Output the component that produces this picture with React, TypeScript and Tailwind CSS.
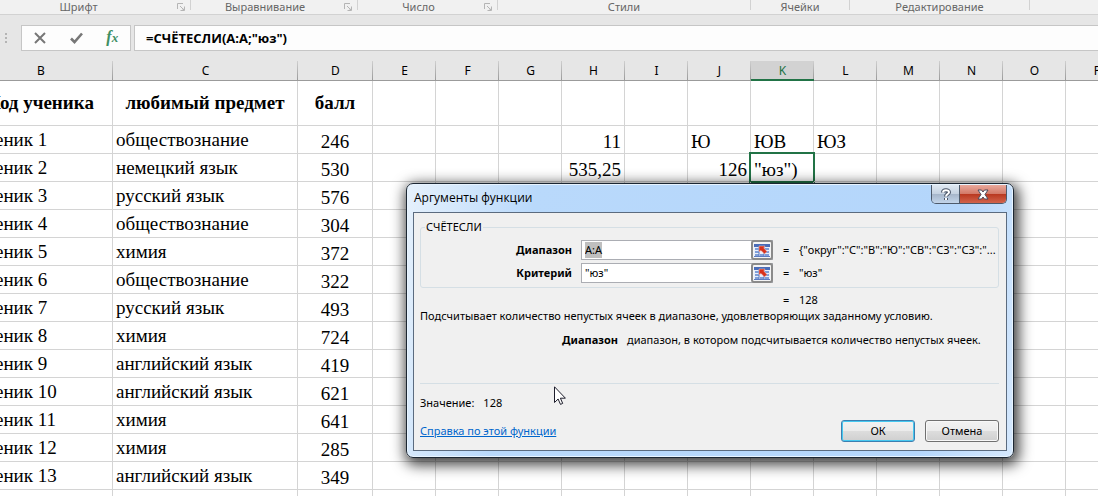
import { useEffect, useRef } from 'react';
import clsx from 'clsx';

type Column = { name: string; width: string };

const ribbonGroups = [
  { title: 'Шрифт', width: 'w-[206px]', launcher: true },
  { title: 'Выравнивание', width: 'w-[167px]', launcher: true },
  { title: 'Число', width: 'w-[140px]', launcher: true },
  { title: 'Стили', width: 'w-[253px]', launcher: false },
  { title: 'Ячейки', width: 'w-[99px]', launcher: false },
  { title: 'Редактирование', width: 'w-[180px]', launcher: false },
];

const columns: Column[] = [
  { name: 'B', width: 'w-[144px]' },
  { name: 'C', width: 'w-[185px]' },
  { name: 'D', width: 'w-[75px]' },
  ...'EFGHIJKLMNOP'.split('').map((name) => ({ name, width: 'w-[63px]' })),
];

const students: [string, number][] = [
  ['обществознание', 246],
  ['немецкий язык', 530],
  ['русский язык', 576],
  ['обществознание', 304],
  ['химия', 372],
  ['обществознание', 322],
  ['русский язык', 493],
  ['химия', 724],
  ['английский язык', 419],
  ['английский язык', 621],
  ['химия', 641],
  ['химия', 285],
  ['английский язык', 349],
];

// cells to the right of the student list, keyed by column + student number
const extraCells: Record<string, string> = {
  H1: '11',
  J1: 'Ю',
  K1: 'ЮВ',
  L1: 'ЮЗ',
  H2: '535,25',
  J2: '126',
  K2: '"юз")',
};

const LauncherIcon = () => (
  <svg width="8" height="8" viewBox="0 0 8 8" fill="none" stroke="#b5b5b5">
    <path d="M.5 6V.5H6M3 3l4 4M7.5 3.5v4h-4" />
    <path d="M5 7h2.5V5z" fill="#b5b5b5" stroke="none" />
  </svg>
);

const Ribbon = () => (
  <div className="h-[15px] shrink-0 border-b border-[#d2d2d2] bg-[#f1f1f1]">
    <div className="-ml-[15px] flex h-[10px] text-[11px] leading-[13px] text-[#666]">
      {ribbonGroups.map((group) => (
        <div
          key={group.title}
          className={clsx(
            'flex shrink-0 border-r border-[#d2d2d2]',
            group.width,
          )}
        >
          <span className="flex-1 text-center">{group.title}</span>
          {group.launcher && (
            <button
              aria-label={`Параметры: ${group.title}`}
              className="flex w-[18px] items-start justify-center pt-[3px]"
            >
              <LauncherIcon />
            </button>
          )}
        </div>
      ))}
    </div>
  </div>
);

const FormulaBar = () => (
  <div className="flex h-[46px] shrink-0 items-start bg-[#e6e6e6] pt-[10px]">
    <div className="flex h-[26px] w-[21px] flex-col items-start justify-center gap-[2px] pl-[5px]">
      <i className="size-[2px] bg-[#b4b4b4]" />
      <i className="size-[2px] bg-[#b4b4b4]" />
      <i className="size-[2px] bg-[#b4b4b4]" />
    </div>
    <div className="flex h-[26px] w-[110px] items-center justify-around border border-[#c6c6c6] bg-[#fdfdfd]">
      <button aria-label="Отмена">
        <svg width="12" height="12" viewBox="0 0 12 12" fill="none">
          <path d="M1 1l10 10M11 1L1 11" stroke="#777" strokeWidth="2" />
        </svg>
      </button>
      <button aria-label="Ввод">
        <svg width="13" height="12" viewBox="0 0 13 12" fill="none">
          <path d="M1 6.5l3.500 3.500L12 1.500" stroke="#777" strokeWidth="2.600" />
        </svg>
      </button>
      <button
        aria-label="Вставить функцию"
        className="pb-px font-['Liberation_Serif',serif] text-[16px] leading-[16px] font-bold text-[#3f8f63] italic"
      >
        f<span className="text-[13px]">x</span>
      </button>
    </div>
    <input
      aria-label="Строка формул"
      defaultValue={'=СЧЁТЕСЛИ(A:A;"юз")'}
      className="ml-[3px] h-[26px] min-w-0 flex-1 border border-r-0 border-[#c6c6c6] bg-[#fdfdfd] px-[11px] font-['Open_Sans',sans-serif] text-[13px] font-bold outline-none"
    />
  </div>
);

const Sheet = () => (
  <div className="min-h-0 flex-1 overflow-hidden bg-white">
    <table className="-ml-[31px] w-[1160px] table-fixed border-separate border-spacing-0 font-['Liberation_Serif',serif] text-[19px] leading-[22px]">
      <thead>
        <tr className="h-[20px]">
          {columns.map(({ name, width }) => (
            <th
              key={name}
              scope="col"
              className={clsx(
                "bg-[linear-gradient(#cfcfcf,#9b9b9b)] bg-[length:1px_100%] bg-right bg-no-repeat px-0 pt-[2px] pb-0 align-top font-['Noto_Sans',sans-serif] text-[12px] leading-[16px] font-normal",
                width,
                name === 'K'
                  ? 'border-b-2 border-[#217346] bg-[#d2d2d2] text-[#217346]'
                  : 'border-b border-[#9b9b9b] bg-[#e6e6e6]',
              )}
            >
              {name}
            </th>
          ))}
        </tr>
      </thead>
      <tbody>
        <tr className="h-[45px] text-center font-bold">
          {columns.map(({ name }) => (
            <td key={name} className="border-r border-b border-[#d4d4d4] p-0">
              {name === 'B' && 'Код ученика'}
              {name === 'C' && 'любимый предмет'}
              {name === 'D' && 'балл'}
            </td>
          ))}
        </tr>
        {students.map(([subject, score], i) => (
          <tr key={i} className="h-[28px]">
            {columns.map(({ name }) => {
              const extra = extraCells[name + (i + 1)];
              return (
                <td
                  key={name}
                  className={clsx(
                    'relative border-r border-b border-[#d4d4d4] px-[3px] py-0 whitespace-nowrap',
                    name === 'B' || name === 'C' ? 'align-middle' : 'align-bottom',
                    name === 'D' && 'text-center',
                    (name === 'H' || name === 'J') && /^\d/.test(extra) && 'text-right',
                  )}
                >
                  {name === 'B' && `Ученик ${i + 1}`}
                  {name === 'C' && subject}
                  {name === 'D' && score}
                  {extra}
                  {name + i === 'K1' && (
                    <span className="absolute -top-[2px] -right-[2px] -bottom-[2px] -left-[2px] border-2 border-[#217346]" />
                  )}
                </td>
              );
            })}
          </tr>
        ))}
        <tr className="h-[28px]">
          {columns.map(({ name }) => (
            <td key={name} className="border-r border-b border-[#d4d4d4] p-0" />
          ))}
        </tr>
      </tbody>
    </table>
  </div>
);

const RefPickerIcon = () => (
  <svg width="16" height="13" viewBox="0 0 16 13">
    <path d="M0 0h16v13H0z" fill="#e9effa" />
    <path d="M0 0h16v3H0z" fill="#4a6cb8" />
    <path d="M1 4h4v2H1zM1 7h4v2H1zM1 10h4v2H1zM6 10h4v2H6zM11 4h4v2h-4zM11 7h4v2h-4zM11 10h4v2h-4z" fill="#7f9ed8" />
    <path d="M5 3v10M10 3v10M0 12.500h16" stroke="#5d7cc0" />
    <path d="M5 2h6L9.800 4 13 7.500 10.500 10 7 6.500 5 8z" fill="#d8321c" stroke="#f6cfc6" strokeWidth=".5" />
  </svg>
);

type ArgumentRowProps = {
  id: string;
  label: string;
  value: string;
  result: string;
  selected?: boolean;
};

const ArgumentRow = ({ id, label, value, result, selected }: ArgumentRowProps) => {
  const inputRef = useRef<HTMLInputElement>(null);

  useEffect(() => {
    if (selected) inputRef.current?.select();
  }, [selected]);

  return (
    <div className="flex h-[20px] items-center">
      <label htmlFor={id} className="w-[151px] text-right font-bold">
        {label}
      </label>
      <div className="ml-[9px] flex h-[20px] w-[192px] border border-[#abadb3] bg-white">
        <input
          id={id}
          ref={inputRef}
          defaultValue={value}
          className="min-w-0 flex-1 pl-[3px] outline-none selection:bg-[#bfbfbf] selection:text-black"
        />
        <button
          aria-label={`Выбрать: ${label}`}
          className="-my-px -mr-px flex w-[22px] items-center justify-center rounded-[3px] border-2 border-[#8a8a8a] bg-[#f4f4f4]"
        >
          <RefPickerIcon />
        </button>
      </div>
      <span className="ml-[10px] w-[16px]">=</span>
      <span className="min-w-0 flex-1 truncate">{result}</span>
    </div>
  );
};

const dialogButton =
  'h-[22px] w-[74px] rounded-[3px] border bg-[linear-gradient(#f2f2f2_0%,#ebebeb_48%,#dddddd_50%,#cfcfcf_100%)] leading-[18px]';

const Dialog = () => (
  <div
    role="dialog"
    aria-labelledby="dialog-title"
    className="absolute top-[183px] left-[406px] w-[608px] rounded-[7px] border border-[#1c2733] bg-[linear-gradient(100deg,#e6f1fc_0%,#b9d9fb_20%,#b4d6fb_85%,#d5e8fd_100%)] px-[6px] pt-px pb-[6px] text-[11px] leading-[16px] shadow-[inset_0_0_0_1px_#e8f4ff,2px_4px_14px_3px_rgba(0,0,0,0.75)]"
  >
    <div className="flex h-[27px] items-start justify-between">
      <h2 id="dialog-title" className="pt-[5px] pl-px font-['Open_Sans',sans-serif] text-[12px]">
        Аргументы функции
      </h2>
      <div className="flex h-[19px] w-[76px] overflow-hidden rounded-b-[5px] border border-t-0 border-[#4d5a6b]">
        <button
          aria-label="Справка"
          className="flex w-[28px] items-center justify-center border-r border-[#4d5a6b] bg-[linear-gradient(#dfe8f2_0%,#c5d2e1_48%,#a5b5c9_50%,#c3d5ea_100%)]"
        >
          <svg width="12" height="13" viewBox="0 0 12 13" fill="none">
            <path d="M3 4.500C3 1.500 9 1.500 9 4.200 9 6 6 6 6 8.500M6 10v2" stroke="#4a5568" strokeWidth="4" />
            <path d="M3 4.500C3 1.500 9 1.500 9 4.200 9 6 6 6 6 8.500M6 10v2" stroke="#fff" strokeWidth="2" />
          </svg>
        </button>
        <button
          aria-label="Закрыть"
          className="flex flex-1 items-center justify-center bg-[linear-gradient(#e9a99c_0%,#d37a69_48%,#b8371f_50%,#d2644c_100%)]"
        >
          <svg width="12" height="11" viewBox="0 0 12 11">
            <path
              d="M1 1h3.500L6 3l1.500-2H11L8 5.500l3 4.500H7.500L6 8l-1.500 2H1l3-4.500z"
              fill="#fff"
              stroke="#4b4b5c"
            />
          </svg>
        </button>
      </div>
    </div>
    <div className="border border-[#5b6b7f] bg-[#f0f0f0] pt-[6px] pr-[7px] pb-[8px] pl-[6px]">
      <fieldset className="min-w-0 rounded-[3px] border border-[#d5dfe5] px-0 pt-[5px] pb-1">
        <legend className="ml-1 px-px">СЧЁТЕСЛИ</legend>
        <div className="flex flex-col gap-[3px]">
          <ArgumentRow
            id="range"
            label="Диапазон"
            value="A:A"
            result={'{"округ":"С":"В":"Ю":"СВ":"СЗ":"СЗ":"...'}
            selected
          />
          <ArgumentRow id="criteria" label="Критерий" value={'"юз"'} result={'"юз"'} />
        </div>
      </fieldset>
      <p className="mt-1 flex pl-[363px]">
        <span className="w-[16px]">=</span>128
      </p>
      <p>
        Подсчитывает количество непустых ячеек в диапазоне, удовлетворяющих заданному условию.
      </p>
      <p className="mt-2 flex gap-[9px]">
        <b className="w-[198px] text-right">Диапазон</b>
        <span>диапазон, в котором подсчитывается количество непустых ячеек.</span>
      </p>
      <hr className="mt-[35px] border-[#d5dfe5]" />
      <p className="mt-[11px] flex gap-[9px]">
        <span>Значение:</span>
        <span>128</span>
      </p>
      <div className="mt-[9px] flex h-[22px] items-center gap-[10px]">
        <a href="#help" className="mr-auto text-[#0066cc] underline">
          Справка по этой функции
        </a>
        <button
          className={clsx(dialogButton, 'border-[#3c7fb1] shadow-[inset_0_0_0_1px_#46c8f0]')}
        >
          ОК
        </button>
        <button
          className={clsx(dialogButton, 'border-[#707070] shadow-[inset_0_0_0_1px_#f8f8f8]')}
        >
          Отмена
        </button>
      </div>
    </div>
  </div>
);

const Cursor = () => (
  <svg
    className="pointer-events-none absolute top-[386px] left-[554px]"
    width="12"
    height="19"
    viewBox="0 0 12 19"
  >
    <path
      d="M.5.800v15.700l3.600-3.500 2.400 5.400 2.200-1-2.300-5.200h5z"
      fill="#fff"
      stroke="#1d1d2b"
    />
  </svg>
);

const App = () => {
  return (
    <main className="relative flex h-screen flex-col overflow-hidden bg-white font-['Noto_Sans',sans-serif] text-black">
      <Ribbon />
      <FormulaBar />
      <Sheet />
      <Dialog />
      <Cursor />
    </main>
  );
};

export default App;
